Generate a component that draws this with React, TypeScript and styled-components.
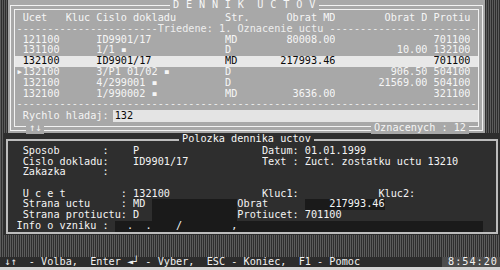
import React from 'react';
import styled, { createGlobalStyle } from 'styled-components';

const GlobalStyle = createGlobalStyle`
  html, body {
    margin: 0;
    padding: 0;
    background: #2a2a2a;
  }
`;

const hatch = 'repeating-linear-gradient(90deg, #5c5c5c 0 1px, #2e2e2e 1px 2px)';

const Screen = styled.div`
  width: 500px;
  height: 270px;
  overflow: hidden;
  display: flex;
  flex-direction: column;
  background: ${hatch};
  font-family: "DejaVu Sans Mono", "Liberation Mono", monospace;
  font-size: 10.2px;
  line-height: 10.8px;
  color: #f4f4f4;
`;

const TopArea = styled.div`
  height: 133px;
  flex-shrink: 0;
  padding-left: 8px;
  display: flex;
`;

const UpperWindow = styled.div`
  position: relative;
  width: 477px;
  box-sizing: border-box;
  background: #a8a8a8;
  padding: 5px 2px 2px 2px;
`;

const OuterFrame = styled.div`
  height: 100%;
  box-sizing: border-box;
  border: 1px solid #f2f2f2;
  padding: 3px;
`;

const InnerFrame = styled.div`
  height: 100%;
  box-sizing: border-box;
  border: 1px solid #f2f2f2;
  padding-top: 3px;
  display: flex;
  flex-direction: column;
`;

const BorderTag = styled.span<{ $left?: number; $right?: number; $top: number; $bg: string }>`
  position: absolute;
  top: ${(p) => p.$top}px;
  ${(p) => (p.$left !== undefined ? `left: ${p.$left}px;` : '')}
  ${(p) => (p.$right !== undefined ? `right: ${p.$right}px;` : '')}
  padding: 0 3px;
  background: ${(p) => p.$bg};
  color: #f6f6f6;
  white-space: pre;
`;

const Title = styled(BorderTag)`
  letter-spacing: 0.35px;
`;

const TableRow = styled.div<{ $active?: boolean }>`
  display: grid;
  grid-template-columns: 1ch 7ch 5ch 21ch 4ch 14ch 15ch 1ch 6ch;
  height: 10.8px;
  padding-left: 1.6px;
  white-space: pre;
  background: ${(p) => (p.$active ? '#e8e8e8' : 'transparent')};
  color: ${(p) => (p.$active ? '#0a0a0a' : '#f6f6f6')};
`;

const Cell = styled.span<{ $right?: boolean }>`
  overflow: hidden;
  text-align: ${(p) => (p.$right ? 'right' : 'left')};
`;

const Marker = styled.span`
  font-size: 7px;
  text-align: center;
`;

const RuleLine = styled.div`
  height: 10.8px;
  padding-left: 1.6px;
  white-space: pre;
  color: #eeeeee;
`;

const SearchRow = styled.div`
  display: flex;
  align-items: center;
  height: 12px;
  padding-left: 7.75px;
  white-space: pre;
`;

const SearchField = styled.div`
  flex: 1;
  height: 12px;
  line-height: 12px;
  margin-left: 4px;
  padding-left: 2px;
  background: #e4e4e4;
  color: #0a0a0a;
`;

const LowerWindow = styled.div`
  height: 102px;
  flex-shrink: 0;
  box-sizing: border-box;
  margin-left: 3px;
  padding: 6px 2px 1px 3px;
  background: #2e2e2e;
`;

const LowerFrame = styled.div`
  position: relative;
  height: 100%;
  box-sizing: border-box;
  border: 2px solid #bdbdbd;
  padding-top: 5px;
`;

const FormRow = styled.div`
  display: flex;
  height: 10.7px;
  line-height: 10.7px;
  padding-left: 8.6px;
  white-space: pre;
`;

const FormCell = styled.span<{ $w?: number; $dark?: boolean; $right?: boolean }>`
  ${(p) => (p.$w !== undefined ? `width: ${p.$w}ch; flex-shrink: 0;` : '')}
  text-align: ${(p) => (p.$right ? 'right' : 'left')};
  background: ${(p) => (p.$dark ? '#1a1a1a' : 'transparent')};
  overflow: hidden;
`;

const HatchGap = styled.div`
  flex: 1;
`;

const StatusBar = styled.div`
  height: 10px;
  flex-shrink: 0;
  display: flex;
  justify-content: space-between;
  line-height: 10px;
  padding-left: 4.3px;
  background: #2c2c2c;
  color: #f2f2f2;
  white-space: pre;
`;

const Clock = styled.span`
  background: #4c4c4c;
  padding: 0 2px 0 6px;
  letter-spacing: 1px;
`;

const BottomStrip = styled.div`
  height: 3px;
  flex-shrink: 0;
  background: #d4d4d4;
`;

type Entry = {
  mark?: boolean;
  active?: boolean;
  ucet: string;
  doklad: string;
  str: string;
  md?: string;
  d?: string;
  prot: string;
};

const entries: Entry[] = [
  { ucet: '121100', doklad: 'ID9901/17', str: 'MD', md: '80008.00', prot: '701100' },
  { ucet: '131100', doklad: '1/1 ▪', str: 'D', d: '10.00', prot: '132100' },
  { ucet: '132100', doklad: 'ID9901/17', str: 'MD', md: '217993.46', prot: '701100', active: true },
  { mark: true, ucet: '132100', doklad: '3/P1 01/02 ▪', str: 'D', d: '906.50', prot: '504100' },
  { ucet: '132100', doklad: '4/299001 ▪', str: 'D', d: '21569.00', prot: '504100' },
  { ucet: '132100', doklad: '1/990002 ▪', str: 'MD', md: '3636.00', prot: '321100' },
];

const dashes = (n: number) => '-'.repeat(n);

const App: React.FC = () => {
  return (
    <Screen>
      <GlobalStyle />
      <TopArea>
        <UpperWindow>
          <OuterFrame>
            <InnerFrame>
              <TableRow>
                <Cell />
                <Cell>Ucet</Cell>
                <Cell>Kluc</Cell>
                <Cell>Cislo dokladu</Cell>
                <Cell>Str.</Cell>
                <Cell $right>Obrat MD</Cell>
                <Cell $right>Obrat D</Cell>
                <Cell />
                <Cell>Protiu</Cell>
              </TableRow>
              <RuleLine>{dashes(23) + 'Triedene: 1. Oznacenie uctu ' + dashes(24)}</RuleLine>
              {entries.map((e, i) => (
                <TableRow key={i} $active={e.active}>
                  <Marker>{e.mark ? '▶' : ''}</Marker>
                  <Cell>{e.ucet}</Cell>
                  <Cell />
                  <Cell>{e.doklad}</Cell>
                  <Cell>{e.str}</Cell>
                  <Cell $right>{e.md ?? ''}</Cell>
                  <Cell $right>{e.d ?? ''}</Cell>
                  <Cell />
                  <Cell>{e.prot}</Cell>
                </TableRow>
              ))}
              <RuleLine>{dashes(75)}</RuleLine>
              <SearchRow>
                Rychlo hladaj:
                <SearchField>132</SearchField>
              </SearchRow>
            </InnerFrame>
          </OuterFrame>
          <Title $top={0} $left={162} $bg="#a8a8a8">D E N N I K  U C T O V</Title>
          <BorderTag $top={123} $left={18} $bg="#a8a8a8">↑↓</BorderTag>
          <BorderTag $top={123} $right={16} $bg="#a8a8a8">Oznacenych : 12</BorderTag>
        </UpperWindow>
      </TopArea>

      <LowerWindow>
        <LowerFrame>
          <BorderTag $top={-7} $left={171} $bg="#2e2e2e">Polozka dennika uctov</BorderTag>
          <FormRow>
            <FormCell $w={1} />
            <FormCell $w={13}>Sposob</FormCell>
            <FormCell $w={5}>:</FormCell>
            <FormCell $w={21}>P</FormCell>
            <FormCell>Datum: 01.01.1999</FormCell>
          </FormRow>
          <FormRow>
            <FormCell $w={1} />
            <FormCell $w={13}>Cislo dokladu</FormCell>
            <FormCell $w={5}>:</FormCell>
            <FormCell $w={21}>ID9901/17</FormCell>
            <FormCell>Text : Zuct. zostatku uctu 13210</FormCell>
          </FormRow>
          <FormRow>
            <FormCell $w={1} />
            <FormCell $w={13}>Zakazka</FormCell>
            <FormCell $w={5}>:</FormCell>
          </FormRow>
          <FormRow />
          <FormRow>
            <FormCell $w={1} />
            <FormCell $w={16}>U c e t</FormCell>
            <FormCell $w={2}>:</FormCell>
            <FormCell $w={21}>132100</FormCell>
            <FormCell $w={19}>Kluc1:</FormCell>
            <FormCell>Kluc2:</FormCell>
          </FormRow>
          <FormRow>
            <FormCell $w={1} />
            <FormCell $w={16}>Strana uctu</FormCell>
            <FormCell $w={2}>:</FormCell>
            <FormCell $w={3}>MD</FormCell>
            <FormCell $w={14} $dark />
            <FormCell $w={11}>Obrat</FormCell>
            <FormCell $w={13} $dark $right>217993.46</FormCell>
          </FormRow>
          <FormRow>
            <FormCell $w={1} />
            <FormCell $w={16}>Strana protiuctu</FormCell>
            <FormCell $w={2}>:</FormCell>
            <FormCell $w={3}>D</FormCell>
            <FormCell $w={14} $dark />
            <FormCell $w={11}>Protiucet:</FormCell>
            <FormCell>701100</FormCell>
          </FormRow>
          <FormRow>
            <FormCell $w={14}>Info o vzniku</FormCell>
            <FormCell $w={2}>:</FormCell>
            <FormCell $w={60} $dark>{'  .  .    /        ,'}</FormCell>
          </FormRow>
        </LowerFrame>
      </LowerWindow>

      <HatchGap />
      <StatusBar>
        <span>↓↑  - Volba,  Enter ◄┘ - Vyber,  ESC - Koniec,  F1 - Pomoc</span>
        <Clock>8:54:20</Clock>
      </StatusBar>
      <BottomStrip />
    </Screen>
  );
};

export default App;
